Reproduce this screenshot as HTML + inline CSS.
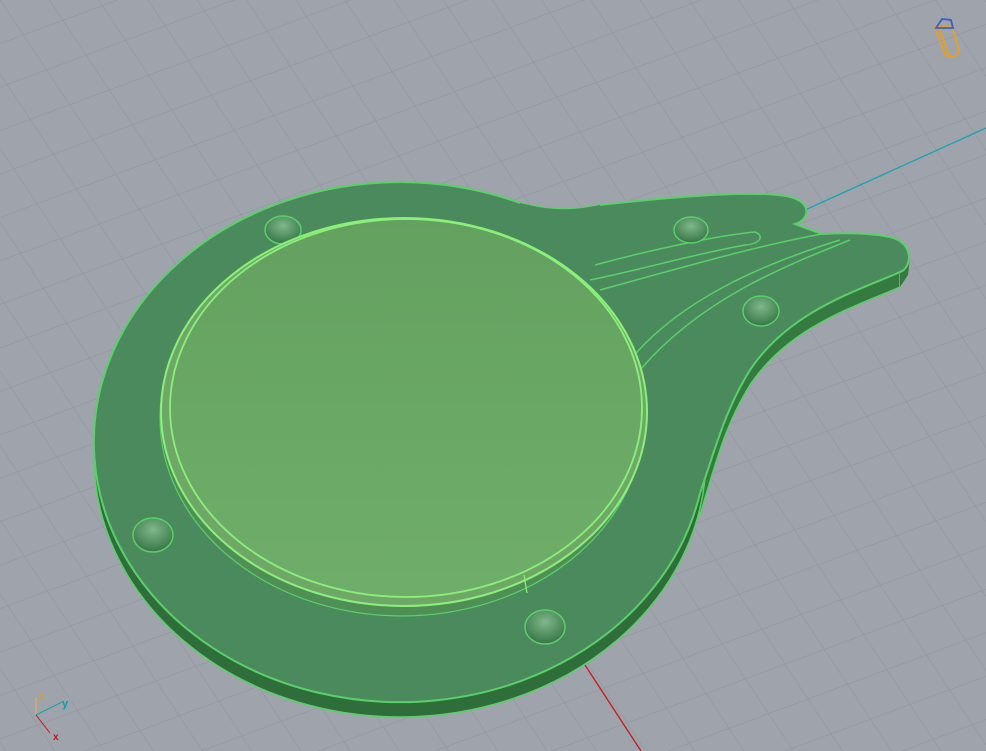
<!DOCTYPE html>
<html><head><style>
html,body{margin:0;padding:0;width:986px;height:751px;overflow:hidden;background:#9fa3ab}
svg{display:block}
text{font-family:"Liberation Sans",sans-serif;font-weight:bold}
</style></head><body>
<svg width="986" height="751" viewBox="0 0 986 751">
<defs>
<pattern id="g" width="42" height="42" patternUnits="userSpaceOnUse" patternTransform="matrix(0.94 -0.35 0.55 0.83 0 0)">
<path d="M0 0H42M0 0V42" stroke="#8f939b" stroke-width="1" fill="none"/>
</pattern>
<radialGradient id="h" cx="0.5" cy="0.35" r="0.6"><stop offset="0" stop-color="#7fb88a"/><stop offset="1" stop-color="#3c7a4c"/></radialGradient>
<linearGradient id="lens" x1="0" y1="0" x2="0" y2="1"><stop offset="0" stop-color="#64a160"/><stop offset="1" stop-color="#6fae6a"/></linearGradient>
</defs>
<rect width="986" height="751" fill="#9fa3ab"/>
<rect width="986" height="751" fill="url(#g)"/>
<line x1="805" y1="210" x2="986" y2="128" stroke="#1aa2b4" stroke-width="1.3"/>
<line x1="585" y1="665" x2="641" y2="751" stroke="#c41a1a" stroke-width="1.3"/>
<!-- handle side -->
<path d="M900 272 L900 287 C860 305 790 325 750 385 C725 425 715 465 700 515 L690 470 C715 450 725 410 750 370 C790 310 860 290 900 272Z" fill="#357a40" stroke="#5ad06a" stroke-width="1.5"/>
<path d="M910 258 L908 275 L900 287 L900 272Z" fill="#357a40"/>
<!-- disc side -->
<ellipse cx="400" cy="457" rx="306" ry="260" fill="#2f6e3a" stroke="#5ad06a" stroke-width="1.5"/>
<!-- disc top fill -->
<ellipse cx="400" cy="442" rx="306" ry="260" fill="#4a8a5c"/>
<!-- handle top -->
<path d="M520 203 C555 212 575 210 600 205 C680 196 760 190 790 197 C812 202 810 220 795 224 L822 234 C850 232 875 234 890 237 C915 243 912 268 900 272 C860 290 790 310 750 370 C725 410 715 450 700 493" fill="#4a8a5c" stroke="#5ad06a" stroke-width="2"/>
<path d="M520 203 C555 212 575 210 600 205 L700 493 L500 420Z" fill="#4a8a5c"/>
<path d="M520 203 A306 260 0 1 0 700 493" fill="none" stroke="#5ad06a" stroke-width="2"/>
<path d="M595 265 C650 250 720 235 755 232 C765 236 760 244 745 245 C690 255 640 270 590 280" fill="none" stroke="#5ad06a" stroke-width="1.5"/>
<path d="M600 290 C680 268 760 245 822 234" fill="none" stroke="#5ad06a" stroke-width="1.5"/>
<path d="M630 360 C680 300 760 265 840 240" fill="none" stroke="#5ad06a" stroke-width="1.5"/>
<path d="M640 370 C700 300 780 268 850 240" fill="none" stroke="#5ad06a" stroke-width="1.5"/>
<!-- holes -->
<g stroke="#5ad06a" stroke-width="1.5" fill="url(#h)">
<ellipse cx="283" cy="230" rx="18" ry="14"/>
<ellipse cx="691" cy="230" rx="17" ry="13"/>
<ellipse cx="761" cy="311" rx="18" ry="15"/>
<ellipse cx="153" cy="535" rx="20" ry="17"/>
<ellipse cx="545" cy="627" rx="20" ry="17"/>
</g>
<!-- lens -->
<ellipse cx="402" cy="418" rx="242" ry="198" fill="#4f8f56" stroke="#5ad06a" stroke-width="1.2"/>
<ellipse cx="404" cy="412" rx="243" ry="194" fill="#6fa866" stroke="#8af07a" stroke-width="2"/>
<ellipse cx="406" cy="408" rx="236" ry="189" fill="url(#lens)" stroke="#8af07a" stroke-width="1.8"/>
<line x1="524" y1="575" x2="527" y2="593" stroke="#8af07a" stroke-width="1.2"/>
<!-- gizmo -->
<g fill="none" stroke="#e8a020" stroke-width="1.8">
<path d="M935 27 L944 52 C947 60 958 58 959 50 L952 27 Z"/>
<path d="M940 30 L949 55"/>
</g>
<path d="M936 28 L942 19 L951 20 L953 28 Z" fill="none" stroke="#3a5fcf" stroke-width="1.8"/>
<!-- axes -->
<line x1="36" y1="697" x2="36" y2="715" stroke="#c8a878" stroke-width="2"/>
<line x1="36" y1="715" x2="62" y2="702" stroke="#19a0b0" stroke-width="1"/>
<line x1="36" y1="715" x2="50" y2="733" stroke="#c01818" stroke-width="1"/>
<text x="39" y="700" font-size="10" fill="#e0a000">z</text>
<text x="62" y="707" font-size="11" fill="#119aaa">y</text>
<text x="53" y="740" font-size="10" fill="#c01818">x</text>
</svg>
</body></html>
